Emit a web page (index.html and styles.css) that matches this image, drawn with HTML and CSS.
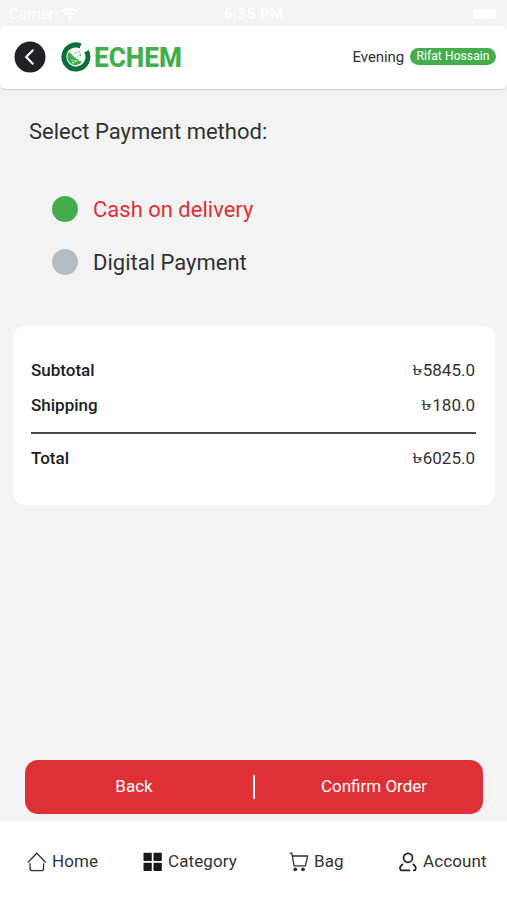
FILE: index.html
```html
<!DOCTYPE html>
<html lang="en">
<head>
<meta charset="utf-8">
<meta name="viewport" content="width=device-width, initial-scale=1">
<title>Echem – Payment</title>
<link rel="stylesheet" href="styles.css">
</head>
<body>
<div class="screen">
  <div class="status">
    <div class="carrier"><span>Carrier</span>
      <svg width="18" height="14" viewBox="0 0 18 14"><path d="M1 5a11.5 11.5 0 0 1 16 0M4 8a7.3 7.3 0 0 1 10 0" fill="none" stroke="#fff" stroke-width="2.4"/><path d="M9 13.2 6.2 10.3a4 4 0 0 1 5.6 0z" fill="#fff"/></svg>
    </div>
    <span class="time">6:35 PM</span>
    <span class="battery"></span>
  </div>
  <header class="header">
    <svg class="back" width="32" height="32" viewBox="0 0 32 32"><circle cx="16" cy="16" r="15.5" fill="#202124"/><path d="M19.3 8.8 12.2 16l7.1 7.2" fill="none" stroke="#fff" stroke-width="2.2"/></svg>
    <svg class="mark" width="30" height="30" viewBox="0 0 30 30">
      <path d="M19.6 3.9A12 12 0 1 0 25.5 9.3" fill="none" stroke="#0e6f3c" stroke-width="5"/>
      <path d="M8.2 9.8a7.8 7.8 0 1 0 12.6 10.4L16 16.8 13.2 15z" fill="#43ad4d"/>
      <path d="M15.4 15.2l4.8-4M10.2 18.6c2.2-1.4 3.8 1.7 7.2-.2" fill="none" stroke="#a4d8a8" stroke-width="1.1"/>
      <g fill="#43ad4d"><circle cx="15" cy="10.8" r=".8"/><circle cx="18" cy="9.8" r=".7"/><circle cx="19.6" cy="13.2" r=".7"/></g>
      <g fill="#fff"><circle cx="12" cy="20.6" r=".9"/><circle cx="14.4" cy="19.4" r=".6"/></g>
    </svg>
    <span class="brand">ECHEM</span>
    <span class="greeting">Evening</span>
    <span class="user">Rifat Hossain</span>
  </header>
  <main class="main">
    <h1 class="title">Select Payment method:</h1>
    <div class="options">
      <div class="option selected"><i class="dot"></i><span>Cash on delivery</span></div>
      <div class="option"><i class="dot"></i><span>Digital Payment</span></div>
    </div>
    <section class="summary">
      <div class="line"><span class="label">Subtotal</span><span><span class="taka">৳</span>5845.0</span></div>
      <div class="line"><span class="label">Shipping</span><span><span class="taka">৳</span>180.0</span></div>
      <div class="line total"><span class="label">Total</span><span><span class="taka">৳</span>6025.0</span></div>
    </section>
    <div class="actions"><span class="action">Back</span><i class="divider"></i><span class="action confirm">Confirm Order</span></div>
  </main>
  <nav class="nav">
    <div class="item home"><svg width="20" height="20" viewBox="0 0 20 20"><path d="M.8 10.5 9.8 1.2l9 9.3M3 11.3v4.9q0 2.5 2.5 2.5h8.6q2.5 0 2.5-2.5v-4.9" fill="none" stroke="#303134" stroke-width="1.3"/></svg><span>Home</span></div>
    <div class="item category"><svg width="20" height="20" viewBox="0 0 20 20"><g fill="#17191b"><rect x=".5" y=".7" width="8.3" height="8.3" rx=".8"/><rect x="10.5" y=".7" width="8.3" height="8.3" rx=".8"/><rect x=".5" y="10.7" width="8.3" height="8.3" rx=".8"/><rect x="10.5" y="10.7" width="8.3" height="8.3" rx=".8"/></g></svg><span>Category</span></div>
    <div class="item bag"><svg width="20" height="20" viewBox="0 0 20 20"><path d="M.7 1.2h2.1l2.3 12.6h11.3L18.6 4H3.6" fill="none" stroke="#303134" stroke-width="1.3"/><circle cx="6.3" cy="17.3" r="1.9" fill="#303134"/><circle cx="14" cy="17.3" r="1.9" fill="#303134"/></svg><span>Bag</span></div>
    <div class="item account"><svg width="20" height="20" viewBox="0 0 20 20"><g fill="none" stroke="#202124" stroke-width="1.7" stroke-linecap="round"><circle cx="10" cy="5.8" r="4.5"/><path d="M4.5 12.4C2.5 13.6 1.9 15 2 16.6q.2 1.8 2 1.8h7.5M15.3 12.4c2 1.2 2.6 2.6 2.5 4.2q-.2 1.8-2 1.8"/></g></svg><span>Account</span></div>
  </nav>
</div>
</body>
</html>
```
FILE: styles.css
```css
* { box-sizing: border-box; }
body { margin: 0; background: #f3f3f3; color: #303134; font-family: Roboto, "Liberation Sans", sans-serif; }
svg { display: block; flex: none; }
.screen { width: 507px; height: 900px; display: flex; flex-direction: column; overflow: hidden; }
.status { height: 26px; flex: none; display: grid; grid-template-columns: 1fr auto 1fr; align-items: center; padding: 2px 11px 0 9px; color: #fff; font-size: 15px; }
.carrier { display: flex; gap: 7px; align-items: center; }
.time { font-weight: 500; letter-spacing: .6px; padding-left: 3px; }
.battery { justify-self: end; width: 23px; height: 10px; border-radius: 3px; background: #fff; }
.header { height: 63px; flex: none; display: flex; align-items: center; background: #fff; border-radius: 6px; padding: 0 11px 2px 14px; box-shadow: 0 1px 1px rgba(0, 0, 0, .14); }
.mark { margin-left: 15px; }
.brand { margin: 2px 0 0 3px; color: #43ad4d; font: 800 28px/1 Roboto, sans-serif; transform: scaleX(.935); transform-origin: left; }
.greeting { margin-left: auto; font-size: 15px; letter-spacing: -.1px; }
.user { margin-left: 6px; height: 17px; width: 86px; text-align: center; border-radius: 9px; background: #43ad4d; color: #fff; font-size: 12px; letter-spacing: .1px; line-height: 17px; white-space: nowrap; }
.main { flex: 1; display: flex; flex-direction: column; }
.title { margin: 30px 0 0 29px; font-size: 22px; line-height: 26px; font-weight: 400; }
.options { display: grid; gap: 27px; margin: 51px 0 0 52px; }
.option { display: flex; align-items: center; gap: 15px; height: 26px; font-size: 22px; line-height: 26px; }
.option span { margin-top: 1px; }
.dot { width: 26px; height: 26px; border-radius: 50%; background: #b4bcc1; }
.selected { color: #df3036; }
.selected .dot { background: #43ad4d; }
.summary { margin: 51px 12px 0 13px; height: 179px; padding: 26px 19px 0 18px; border-radius: 12px; background: #fff; }
.line { display: flex; justify-content: space-between; height: 35px; align-items: center; font-size: 17px; line-height: 20px; }
.line > :last-child { padding-right: 1px; }
.label { font-weight: 500; color: #202124; }
.taka { display: inline-block; width: 11px; transform: scale(1.3, .82); transform-origin: left 60%; line-height: 20px; }
.total { margin-top: 10px; border-top: 2px solid #4a4848; height: 50px; }
.actions { display: flex; align-items: center; margin: auto 24px 7px 25px; height: 54px; border-radius: 13px; background: #df3036; color: #fff; font-size: 17px; }
.action { flex: 1; text-align: center; padding: 0 12px 2px 0; }
.confirm { padding: 0 0 2px 10px; }
.divider { width: 2px; height: 24px; margin-left: -2px; background: #fff; }
.nav { flex: none; height: 79px; display: flex; padding: 31px 0 0 27px; background: #fff; }
.item { display: flex; height: 20px; gap: 5px; align-items: center; font-size: 17px; letter-spacing: .1px; }
.item span { margin-top: -2px; }
.home { width: 116px; }
.category { width: 146px; }
.bag { width: 109px; }
```
